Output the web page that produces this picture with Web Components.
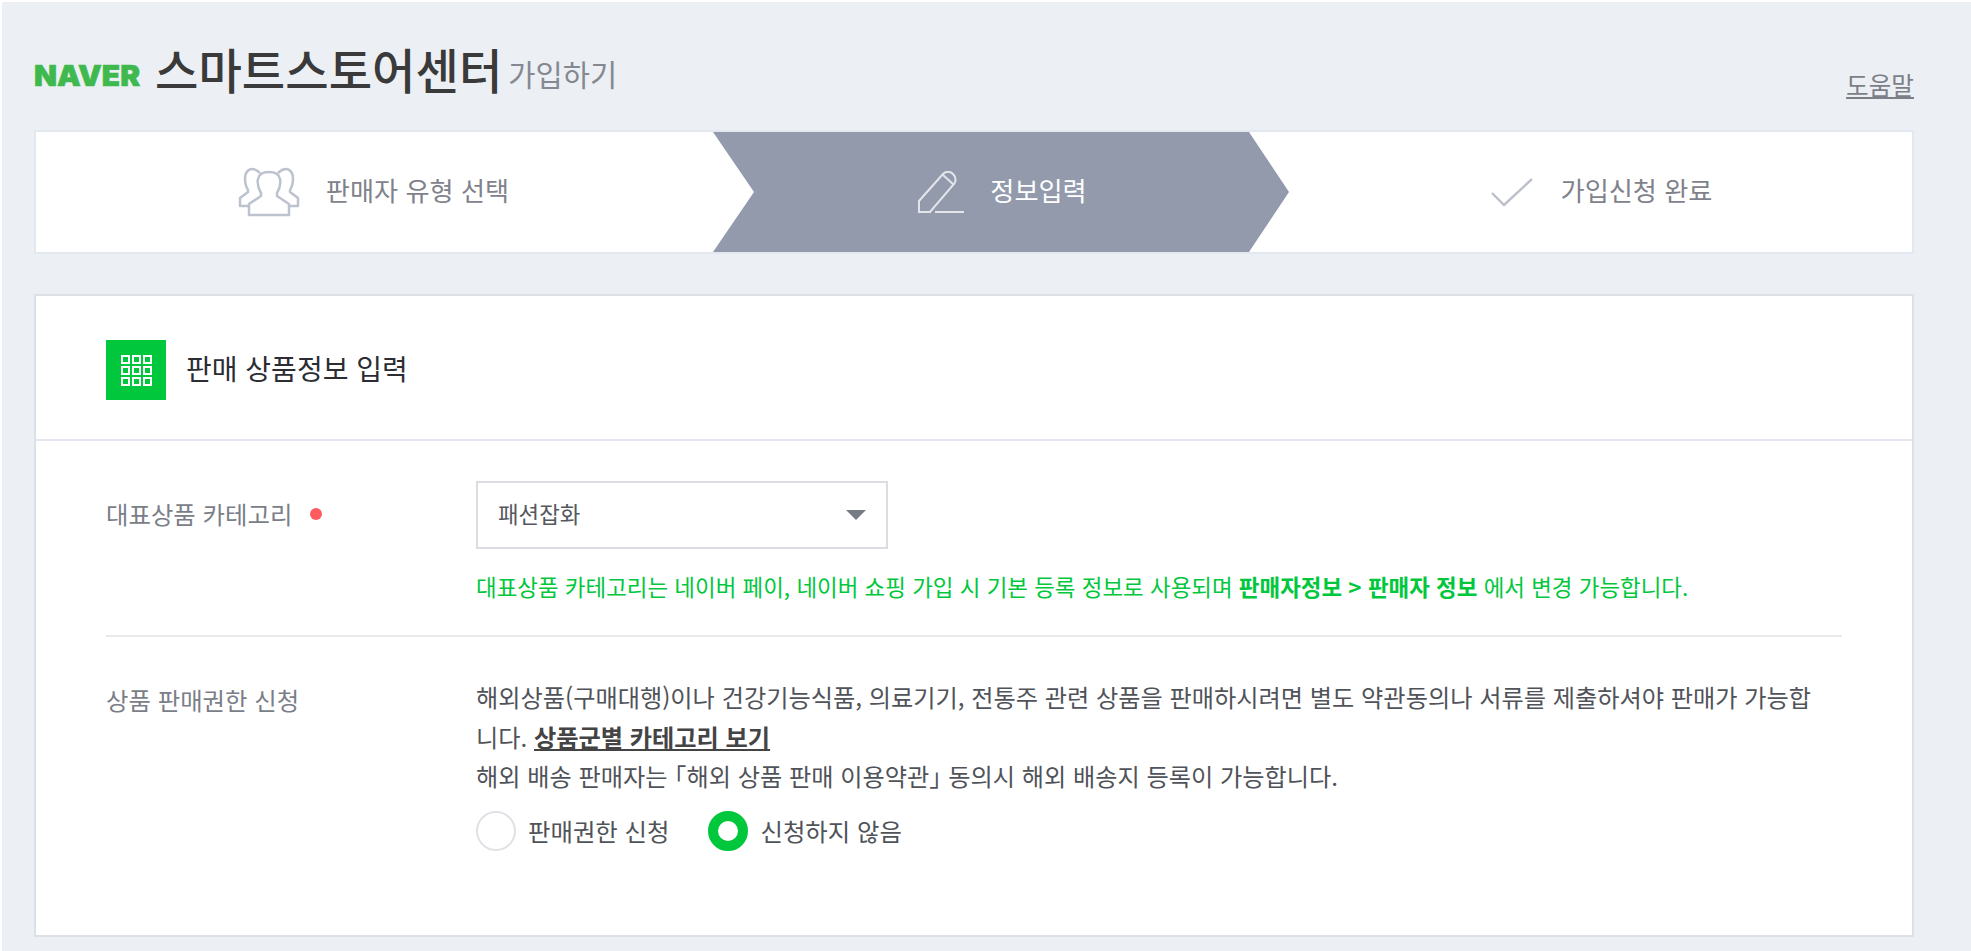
<!DOCTYPE html>
<html lang="ko">
<head>
<meta charset="utf-8">
<title>스마트스토어센터 가입하기</title>
<style>
  html,body{margin:0;background:#fff;}
  body{font-family:"Noto Sans CJK KR","Noto Sans",sans-serif;}
  a{font-weight:700;color:#444;text-decoration:underline;}
  b{font-weight:700;}
</style>
</head>
<body>
<signup-page>
  <store-header></store-header>
  <step-bar>
    <step-item label="판매자 유형 선택" icon="users"></step-item>
    <step-item label="정보입력" icon="pen" active></step-item>
    <step-item label="가입신청 완료" icon="check"></step-item>
  </step-bar>
  <form-panel heading="판매 상품정보 입력">
    <form-row label="대표상품 카테고리" required>
      <select-box value="패션잡화"></select-box>
      <p class="note">대표상품 카테고리는 네이버 페이, 네이버 쇼핑 가입 시 기본 등록 정보로 사용되며 <b>판매자정보 &gt; 판매자 정보</b> 에서 변경 가능합니다.</p>
    </form-row>
    <form-row label="상품 판매권한 신청" last>
      <p class="desc">해외상품(구매대행)이나 건강기능식품, 의료기기, 전통주 관련 상품을 판매하시려면 별도 약관동의나 서류를 제출하셔야 판매가 가능합니다. <a>상품군별 카테고리 보기</a><br>해외 배송 판매자는 ｢해외 상품 판매 이용약관｣ 동의시 해외 배송지 등록이 가능합니다.</p>
      <radio-group>
        <radio-option label="판매권한 신청"></radio-option>
        <radio-option label="신청하지 않음" checked></radio-option>
      </radio-group>
    </form-row>
  </form-panel>
</signup-page>

<script>
const FONT='"Noto Sans CJK KR","Noto Sans",sans-serif';

const ICONS={
  users:`<svg width="62" height="50" viewBox="-1 -1 62 50" fill="none" stroke="#bcc2ce" stroke-width="2.5" stroke-linejoin="round">
    <path d="M21 5C18 2 15 1 13 1C9 1 6 5 6 10C6 15 7 19 9 22L9 24L1 30L1 38L9 38"/>
    <path d="M39 5C42 2 45 1 47 1C51 1 54 5 54 10C54 15 53 19 51 22L51 24L59 30L59 38L51 38"/>
    <path d="M22 25C19 20 18 16 19 11C20 6 25 4 30 4C35 4 40 6 41 11C42 16 41 20 38 25L38 28L50 36L50 47L10 47L10 36L22 28Z"/>
  </svg>`,
  pen:`<svg width="46" height="42" viewBox="0 0 46 42" fill="none" stroke="#e3e5ea" stroke-width="2">
    <path d="M1 41L1 30L25 3C28 0 32 0 35 3C38 6 38 10 36 13L12 41Z"/>
    <path d="M25 4L36 14"/>
    <path d="M17 41L46 41"/>
  </svg>`,
  check:`<svg width="42" height="29" viewBox="0 0 42 29" fill="none" stroke="#bcc0cb" stroke-width="2.4">
    <path d="M1 15L13 27L41 1"/>
  </svg>`
};

class SignupPage extends HTMLElement{
  constructor(){
    super();
    this.attachShadow({mode:'open'}).innerHTML=`
<style>
  :host{display:block;margin:2px 0 0 2px;padding:0 57px 14px 32px;background:#ecf0f4;font-family:${FONT};min-height:949px;box-sizing:border-box;}
</style>
<slot></slot>`;
  }
}
customElements.define('signup-page',SignupPage);

class StoreHeader extends HTMLElement{
  constructor(){
    super();
    this.attachShadow({mode:'open'}).innerHTML=`
<style>
  :host{display:flex;align-items:flex-start;height:128px;}
  .logo{margin-top:56px;width:121px;font:900 29px/36px Inter,"Noto Sans CJK KR",sans-serif;color:#3fb94e;-webkit-text-stroke:.6px #3fb94e;}
  .logo span{display:inline-block;transform:scaleX(1.03);transform-origin:0 50%;}
  h1{margin:35px 0 0;font-size:47.2px;line-height:64px;font-weight:500;color:#3a3a3a;}
  .sub{margin:51px 0 0 6px;font-size:29.6px;line-height:42px;color:#858890;}
  a{margin:65px 0 0 auto;font-size:24.6px;line-height:34px;color:#7c7f88;text-decoration:underline;}
</style>
<div class="logo"><span>NAVER</span></div>
<h1>스마트스토어센터</h1>
<div class="sub">가입하기</div>
<a>도움말</a>`;
  }
}
customElements.define('store-header',StoreHeader);

class StepBar extends HTMLElement{
  constructor(){
    super();
    this.attachShadow({mode:'open'}).innerHTML=`
<style>
  :host{display:grid;grid-template-columns:677px 576px 1fr;height:120px;border:2px solid #e3e8f0;background:#fff;}
</style>
<slot></slot>`;
  }
}
customElements.define('step-bar',StepBar);

class StepItem extends HTMLElement{
  constructor(){
    super();
    const icon=ICONS[this.getAttribute('icon')];
    this.attachShadow({mode:'open'}).innerHTML=`
<style>
  :host{display:flex;align-items:center;justify-content:center;gap:26px;font-size:26.2px;color:#7f828b;}
  :host([active]){background:#929aac;color:#fff;padding-left:3px;clip-path:polygon(0 0,calc(100% - 40px) 0,100% 50%,calc(100% - 40px) 100%,0 100%,41px 50%);}
  :host([icon=users]){padding-right:2px;}
  :host([icon=check]){gap:28px;padding-left:2px;}
  svg{display:block;}
  span{padding-bottom:4px;}
</style>
${icon}<span>${this.getAttribute('label')}</span>`;
  }
}
customElements.define('step-item',StepItem);

class FormPanel extends HTMLElement{
  constructor(){
    super();
    this.attachShadow({mode:'open'}).innerHTML=`
<style>
  :host{display:block;margin-top:40px;height:643px;box-sizing:border-box;border:2px solid #dde0e7;background:#fff;}
  header{display:flex;align-items:center;gap:20px;height:145px;padding:5px 70px 0;box-sizing:border-box;border-bottom:2px solid #e4e7f0;}
  .badge{width:60px;height:60px;background:#00c73c;display:flex;align-items:center;justify-content:center;}
  h2{margin:0 0 4px;font-size:28px;font-weight:400;color:#2b2d33;}
  .rows{padding:0 70px;}
</style>
<header>
  <div class="badge">
    <svg width="31" height="31" viewBox="0 0 31 31" fill="none" stroke="#fff" stroke-width="2">
      <path d="M1 1h7v7h-7zM12 1h7v7h-7zM23 1h7v7h-7zM1 12h7v7h-7zM12 12h7v7h-7zM23 12h7v7h-7zM1 23h7v7h-7zM12 23h7v7h-7zM23 23h7v7h-7z"/>
    </svg>
  </div>
  <h2>${this.getAttribute('heading')}</h2>
</header>
<div class="rows"><slot></slot></div>`;
  }
}
customElements.define('form-panel',FormPanel);

class FormRow extends HTMLElement{
  constructor(){
    super();
    this.attachShadow({mode:'open'}).innerHTML=`
<style>
  :host{display:grid;grid-template-columns:370px 1fr;padding:40px 0 32px;border-bottom:2px solid #e9e9ec;}
  :host([last]){border-bottom:0;padding-top:40px;}
  .label{font-size:24.4px;line-height:34px;color:#7a7e88;padding-top:16px;display:flex;align-items:center;gap:18px;height:34px;}
  :host([last]) .label{padding-top:0;height:46px;}
  i{width:12px;height:12px;border-radius:50%;background:#ff5a5f;}
  ::slotted(p){margin:0;font-size:24.2px;line-height:39.5px;}
  ::slotted(.note){margin-top:20px;color:#00c73c;font-size:22.45px;line-height:34px;}
  ::slotted(.desc){color:#505359;padding-right:22px;}
</style>
<div class="label">${this.getAttribute('label')}${this.hasAttribute('required')?'<i></i>':''}</div>
<div class="body"><slot></slot></div>`;
  }
}
customElements.define('form-row',FormRow);

class SelectBox extends HTMLElement{
  constructor(){
    super();
    this.attachShadow({mode:'open'}).innerHTML=`
<style>
  :host{display:flex;align-items:center;justify-content:space-between;width:412px;height:68px;box-sizing:border-box;border:2px solid #dcdde3;padding:0 20px;font-size:22.4px;color:#55585f;}
  span{padding-bottom:4px;}
  i{width:0;height:0;border-left:10px solid transparent;border-right:10px solid transparent;border-top:10px solid #777b84;}
</style>
<span>${this.getAttribute('value')}</span><i></i>`;
  }
}
customElements.define('select-box',SelectBox);

class RadioGroup extends HTMLElement{
  constructor(){
    super();
    this.attachShadow({mode:'open'}).innerHTML=`
<style>:host{display:flex;gap:39px;margin-top:15px;}</style>
<slot></slot>`;
  }
}
customElements.define('radio-group',RadioGroup);

class RadioOption extends HTMLElement{
  constructor(){
    super();
    this.attachShadow({mode:'open'}).innerHTML=`
<style>
  :host{display:flex;align-items:center;gap:12px;font-size:24.4px;color:#505359;}
  i{width:40px;height:40px;box-sizing:border-box;border-radius:50%;border:2px solid #e0e2e8;background:#fff;}
  :host([checked]) i{border:10px solid #00c73c;}
</style>
<i></i><span>${this.getAttribute('label')}</span>`;
  }
}
customElements.define('radio-option',RadioOption);
</script>
</body>
</html>
